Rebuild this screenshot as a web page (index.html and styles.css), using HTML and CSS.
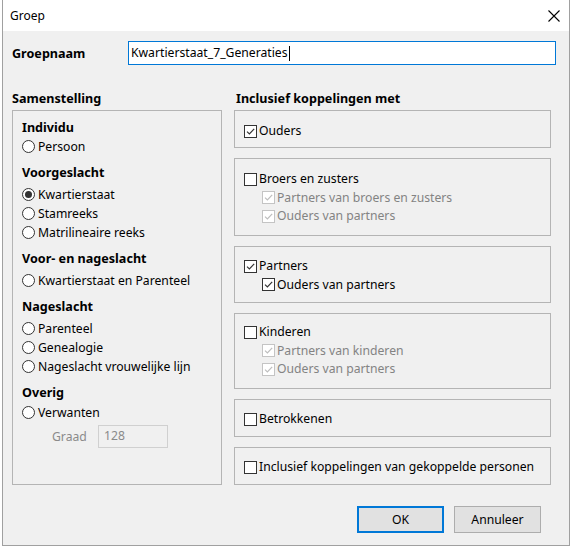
FILE: index.html
```html
<!DOCTYPE html>
<html>
<head>
<meta charset="utf-8">
<link rel="stylesheet" href="styles.css">
</head>
<body>
<div class="window">
  <div class="titlebar">
    <span class="title">Groep</span>
    <svg class="close" width="12" height="12" viewBox="0 0 12 12"><path d="M0.5 0.5 L11.5 11.5 M11.5 0.5 L0.5 11.5" stroke="#000" stroke-width="1.1" fill="none"/></svg>
  </div>
  <div class="client">
    <div class="name-row">
      <label class="name-label">Groepnaam</label>
      <div class="name-input">Kwartierstaat_7_Generaties<span class="caret"></span></div>
    </div>
    <div class="columns">
      <div class="col-left">
        <div class="col-head">Samenstelling</div>
        <div class="box left-box">
          <div class="group g-first">
            <div class="ghead">Individu</div>
            <div class="opt"><span class="radio"></span>Persoon</div>
          </div>
          <div class="group">
            <div class="ghead">Voorgeslacht</div>
            <div class="opt"><span class="radio on"></span>Kwartierstaat</div>
            <div class="opt"><span class="radio"></span>Stamreeks</div>
            <div class="opt"><span class="radio"></span>Matrilineaire reeks</div>
          </div>
          <div class="group">
            <div class="ghead">Voor- en nageslacht</div>
            <div class="opt"><span class="radio"></span>Kwartierstaat en Parenteel</div>
          </div>
          <div class="group">
            <div class="ghead">Nageslacht</div>
            <div class="opt"><span class="radio"></span>Parenteel</div>
            <div class="opt"><span class="radio"></span>Genealogie</div>
            <div class="opt"><span class="radio"></span>Nageslacht vrouwelijke lijn</div>
          </div>
          <div class="group g-last">
            <div class="ghead">Overig</div>
            <div class="opt"><span class="radio"></span>Verwanten</div>
            <div class="graad-row">
              <span class="graad-label">Graad</span>
              <div class="graad-input">128</div>
            </div>
          </div>
        </div>
      </div>
      <div class="col-right">
        <div class="col-head right-head">Inclusief koppelingen met</div>
        <div class="box rbox h38 first">
          <div class="opt"><span class="cb checked"><svg viewBox="0 0 11 11"><path d="M2 5.6 L4.4 8 L9.2 2.8" /></svg></span>Ouders</div>
        </div>
        <div class="box rbox h78">
          <div class="opt"><span class="cb"></span>Broers en zusters</div>
          <div class="opt sub disabled"><span class="cb checked"><svg viewBox="0 0 11 11"><path d="M2 5.6 L4.4 8 L9.2 2.8" /></svg></span>Partners van broers en zusters</div>
          <div class="opt sub disabled"><span class="cb checked"><svg viewBox="0 0 11 11"><path d="M2 5.6 L4.4 8 L9.2 2.8" /></svg></span>Ouders van partners</div>
        </div>
        <div class="box rbox h57">
          <div class="opt"><span class="cb checked"><svg viewBox="0 0 11 11"><path d="M2 5.6 L4.4 8 L9.2 2.8" /></svg></span>Partners</div>
          <div class="opt sub"><span class="cb checked"><svg viewBox="0 0 11 11"><path d="M2 5.6 L4.4 8 L9.2 2.8" /></svg></span>Ouders van partners</div>
        </div>
        <div class="box rbox h76">
          <div class="opt"><span class="cb"></span>Kinderen</div>
          <div class="opt sub disabled"><span class="cb checked"><svg viewBox="0 0 11 11"><path d="M2 5.6 L4.4 8 L9.2 2.8" /></svg></span>Partners van kinderen</div>
          <div class="opt sub disabled"><span class="cb checked"><svg viewBox="0 0 11 11"><path d="M2 5.6 L4.4 8 L9.2 2.8" /></svg></span>Ouders van partners</div>
        </div>
        <div class="box rbox h38">
          <div class="opt"><span class="cb"></span>Betrokkenen</div>
        </div>
        <div class="box rbox h38">
          <div class="opt"><span class="cb"></span>Inclusief koppelingen van gekoppelde personen</div>
        </div>
      </div>
    </div>
    <div class="buttons">
      <div class="btn default">OK</div>
      <div class="btn">Annuleer</div>
    </div>
  </div>
</div>
</body>
</html>
```
FILE: styles.css
```css
* { box-sizing: border-box; }
html, body { margin: 0; padding: 0; }
body {
  background: #ffffff;
  font-family: "Noto Sans", "Liberation Sans", sans-serif;
  font-size: 12.2px;
  color: #000;
  width: 572px;
  height: 547px;
  overflow: hidden;
}
.window {
  margin-left: 2px;
  width: 568px;
  height: 546px;
  border: 1px solid #a0a0a0;
  border-top: none;
  background: #f0f0f0;
}
.titlebar {
  height: 31px;
  background: #ffffff;
  display: flex;
  align-items: center;
  justify-content: space-between;
  padding: 0 8px 0 7px;
}
.title { font-size: 12px; }
.close { display: block; margin-right: 1px; }
.client {
  padding: 10px 17px 0 9px;
}
.name-row {
  display: flex;
  align-items: center;
  height: 24px;
}
.name-label {
  font-weight: 700;
  font-size: 12.6px;
  width: 116px;
}
.name-input {
  flex: 1;
  height: 24px;
  margin-right: -4px;
  border: 1px solid #0078d7;
  background: #fff;
  padding: 0 0 0 2px;
  line-height: 22px;
  display: flex;
  align-items: center;
}
.caret {
  display: inline-block;
  width: 1px;
  height: 15px;
  background: #000;
  margin-left: 1px;
}
.columns {
  display: flex;
  gap: 12px;
  margin-top: 25px;
}
.col-left { width: 210px; }
.col-right { width: 317px; }
.col-head {
  font-weight: 700;
  font-size: 12.6px;
  line-height: 18px;
  height: 18px;
  margin-bottom: 2px;
}
.right-head { padding-left: 2px; }
.box {
  border: 1px solid #b4b4b4;
}
.left-box {
  height: 375px;
  padding: 7px 9px 0 9px;
}
.group + .group { margin-top: 7.5px; }
.ghead {
  font-weight: 700;
  font-size: 12.6px;
  line-height: 20px;
  height: 20px;
  margin-bottom: 1.5px;
}
.g-first .ghead { margin-bottom: -1.5px; }
.g-last .ghead { margin-bottom: -0.5px; }
.opt {
  display: flex;
  align-items: center;
  line-height: 19px;
  height: 19px;
  white-space: nowrap;
}
.radio {
  width: 13px;
  height: 13px;
  border: 1px solid #333;
  border-radius: 50%;
  background: #fff;
  margin-right: 3px;
  flex: none;
  display: flex;
  align-items: center;
  justify-content: center;
}
.radio.on::after {
  content: "";
  width: 7px;
  height: 7px;
  border-radius: 50%;
  background: #333;
}
.graad-row {
  display: flex;
  align-items: center;
  margin-top: 4px;
  height: 22px;
}
.graad-label {
  color: #8a8a8a;
  margin-left: 30px;
  width: 46px;
}
.graad-input {
  width: 70px;
  height: 23px;
  border: 1px solid #d0d0d0;
  background: #f0f0f0;
  color: #8a8a8a;
  padding-left: 5px;
  line-height: 20px;
}
.rbox {
  padding: 10px 9px 0 9px;
  margin-bottom: 10px;
}
.h38 { height: 38px; }
.h38.first { padding-top: 11px; }
.h78 { height: 78px; padding-top: 11px; }
.h57 { height: 57px; }
.h76 { height: 76px; padding-top: 9px; }
.rbox .opt { line-height: 18.5px; height: 18.5px; }
.cb {
  width: 13px;
  height: 13px;
  border: 1px solid #333;
  background: #fff;
  margin-right: 2px;
  flex: none;
  display: flex;
}
.cb svg {
  width: 11px;
  height: 11px;
  fill: none;
  stroke: #333;
  stroke-width: 1.2;
}
.sub { padding-left: 18px; }
.disabled { color: #838383; }
.disabled .cb { border-color: #c4c4c4; }
.disabled .cb svg { stroke: #bdbdbd; }
.buttons {
  display: flex;
  justify-content: flex-end;
  gap: 10px;
  padding-right: 11px;
  margin-top: 11px;
}
.btn {
  width: 87px;
  height: 27px;
  border: 1px solid #adadad;
  background: #e1e1e1;
  display: flex;
  align-items: center;
  justify-content: center;
}
.btn.default {
  border: 2px solid #0078d7;
}
```
